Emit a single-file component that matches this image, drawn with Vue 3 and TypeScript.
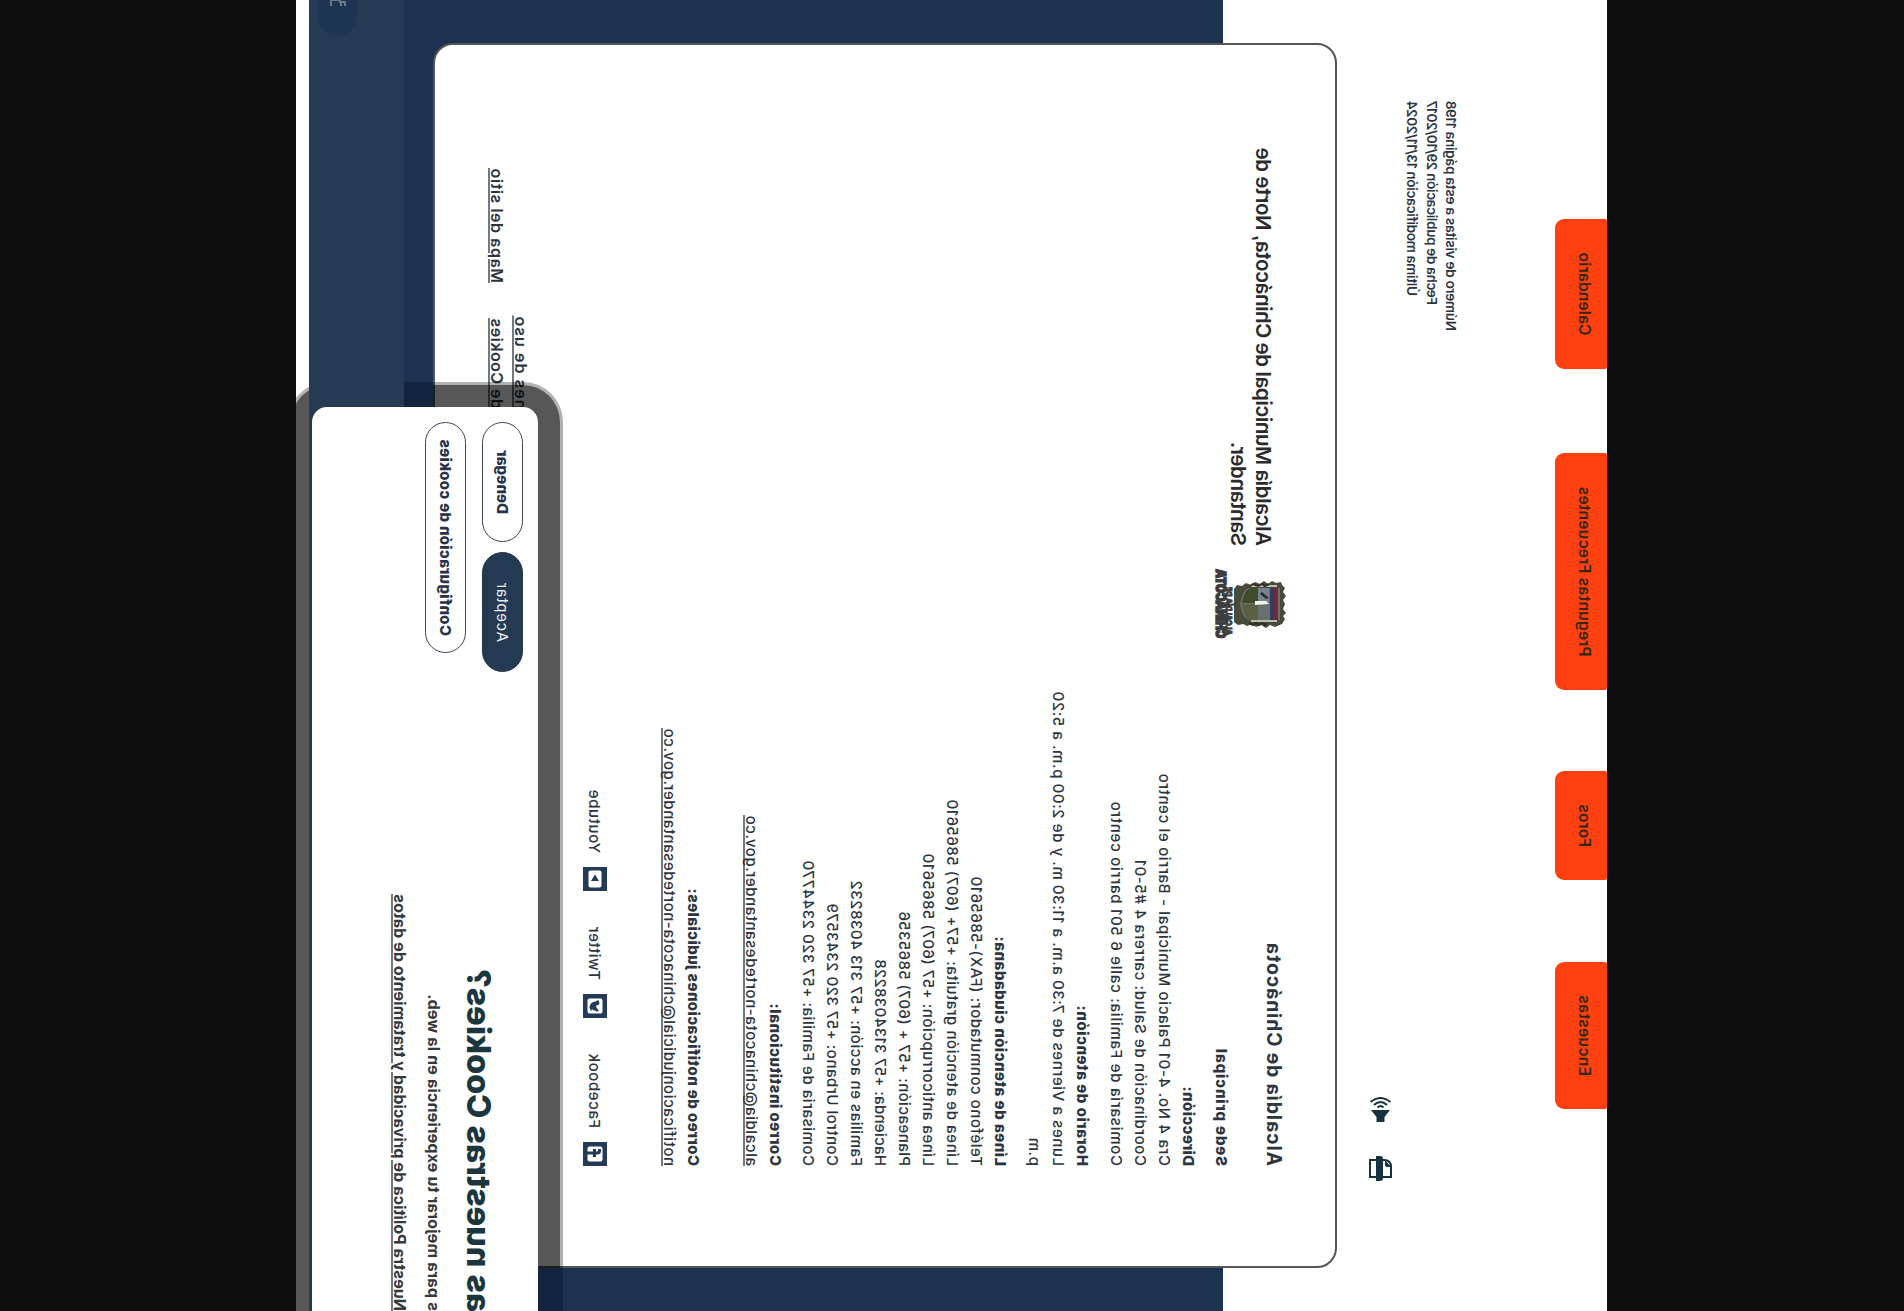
<script setup lang="ts">
import type { Directive } from 'vue'

interface Line {
  text: string
  width: number
  kind?: 'bold' | 'link'
}

const tabs = [
  { text: 'Encuestas', cls: 'tab-surveys', width: 81 },
  { text: 'Foros', cls: 'tab-forums', width: 43 },
  { text: 'Preguntas Frecuentes', cls: 'tab-faq', width: 170 },
  { text: 'Calendario', cls: 'tab-calendar', width: 83 },
]

const meta: Line[] = [
  { text: 'Número de visitas a esta página 1198', width: 230 },
  { text: 'Fecha de publicación 29/10/2017', width: 204 },
  { text: 'Última modificación 13/11/2024', width: 195 },
]

const groups: Line[][] = [
  [{ text: 'Sede principal', width: 118, kind: 'bold' }],
  [
    { text: 'Dirección:', width: 80, kind: 'bold' },
    { text: 'Cra 4 No. 4-01 Palacio Municipal - Barrio el centro', width: 393 },
    { text: 'Coordinación de Salud: carrera 4 #5-01', width: 307 },
    { text: 'Comisaría de Familia: calle 6 501 barrio centro', width: 365 },
  ],
  [
    { text: 'Horario de atención:', width: 161, kind: 'bold' },
    { text: 'Lunes a Viernes de 7:30 a.m. a 11:30 m. y de 2:00 p.m. a 5:20', width: 475 },
    { text: 'p.m', width: 29 },
  ],
  [
    { text: 'Línea de atención ciudadana:', width: 230, kind: 'bold' },
    { text: 'Teléfono conmutador: (FAX)-5865610', width: 290 },
    { text: 'Línea de atención gratuita: +57+ (607) 5865610', width: 367 },
    { text: 'Línea anticorrupción: +57 (607) 5865610', width: 313 },
    { text: 'Planeación: +57 + (607) 5865356', width: 255 },
    { text: 'Hacienda: +57 3134038228', width: 207 },
    { text: 'Familias en acción: +57 313 4038232', width: 286 },
    { text: 'Control Urbano: +57 320 2343579', width: 263 },
    { text: 'Comisaria de Familia: +57 320 2344770', width: 306 },
  ],
  [
    { text: 'Correo institucional:', width: 163, kind: 'bold' },
    { text: 'alcaldia@chinacota-nortedesantander.gov.co', width: 351, kind: 'link' },
  ],
  [
    { text: 'Correo de notificaciones judiciales:', width: 278, kind: 'bold' },
    { text: 'notificacionjudicial@chinacota-nortedesantander.gov.co', width: 438, kind: 'link' },
  ],
]

// Tracks a line of text out to its set width. The page is turned on its side,
// so the run of the text is the height of its on-screen box.
const vFit: Directive<HTMLElement, number> = {
  mounted(el, { value }) {
    const natural = el.getBoundingClientRect().height
    const count = (el.textContent ?? '').length
    el.style.letterSpacing = `${(value - natural) / count}px`
  },
}
</script>

<template>
  <div class="stage">
    <div class="page">
      <nav class="tabs">
        <a v-for="t in tabs" :key="t.text" :class="['tab', t.cls]"><span v-fit="t.width">{{ t.text }}</span></a>
      </nav>

      <div class="meta">
        <div v-for="m in meta" :key="m.text"><span v-fit="m.width">{{ m.text }}</span></div>
      </div>

      <div class="tools">
        <svg width="25" height="23" viewBox="0 0 25 23">
          <path d="M4 10V1h10q7 0 7 7v2z" fill="#fff" stroke="#16323f" stroke-width="2" />
          <path d="M14 1l7 6h-5q-2 0-2-2z" fill="#16323f" />
          <path d="M0 12q0-3 3-3h19q3 0 3 3v4h-3v-1H3v1H0z" fill="#16323f" />
          <path d="M4 15h17v7H4z" fill="#fff" stroke="#16323f" stroke-width="2" />
        </svg>
        <svg width="25" height="23" viewBox="0 0 25 23">
          <path d="M0 7.500h5L12 2v19L5 15.500H0z" fill="#16323f" />
          <path d="M14.500 8.500q3 3 0 6M17 5q6 6.500 0 13M20 1.500q8 10 0 20" fill="none" stroke="#16323f" stroke-width="2" />
        </svg>
      </div>

      <main class="card">
        <header class="head">
          <h1><span v-fit="224">Alcaldía de Chinácota</span></h1>
          <svg class="crest" width="73" height="74" viewBox="0 0 73 74">
            <path d="M16 5l5-3 3 2 3-3 4 3 5-2 4 2 4-3 4 3 4-2 3 3 3 1-1 5 2 4-3 4 3 4-3 4 2 5-3 4 2 5-3 4 1 5-4 3H18l-3-4 1-5-2-4 2-5-3-4 2-5-3-5 3-4-2-5z" fill="#484a3a" />
            <path d="M20 7h32v30q0 7-16 10Q20 44 20 37z" fill="#6f7262" />
            <path d="M20 9h32v4H20z" fill="#71283f" />
            <path d="M20 13h32v4H20z" fill="#303f5f" />
            <path d="M20 18h16v14H20z" fill="#67706c" />
            <path d="M37 18h15v14H37z" fill="#77828a" />
            <path d="M20 29h16v16q-15-2-16-8z" fill="#5a5f45" />
            <path d="M37 29h15v6q-1 8-15 10z" fill="#414a2c" />
            <path d="M36 18l3 3v11h-4z" fill="#f3f3ee" />
            <path d="M42 18l6 7-2 2-5-6z" fill="#28313a" />
            <path d="M19 10v26M54 10v26" stroke="#e2e2dc" stroke-width="1.500" />
            <path d="M17 20l-2 2 2 3-2 3 2 3-2 3 2 4M56 18l-2 4 2 3-2 4 2 5-2 3" fill="none" stroke="#2e3123" stroke-width="2" />
            <text x="5" y="61.500" textLength="48" lengthAdjust="spacingAndGlyphs" class="crest-small">ALCALDÍA DE</text>
            <text x="2" y="71.500" textLength="69" lengthAdjust="spacingAndGlyphs" class="crest-large">CHINÁCOTA</text>
          </svg>
          <div class="entity">
            <div><span v-fit="398">Alcaldía Municipal de Chinácota, Norte de</span></div>
            <div><span v-fit="104">Santander.</span></div>
          </div>
        </header>

        <section v-for="(g, i) in groups" :key="i" :class="['group', 'group-' + i]">
          <div v-for="l in g" :key="l.text" :class="['line', l.kind]"><span v-fit="l.width">{{ l.text }}</span></div>
        </section>

        <div class="social">
          <a class="facebook">
            <svg width="24" height="24" viewBox="0 0 24 24">
              <path d="M0 0h24v24H0z" fill="#243a56" />
              <rect x="4.500" y="4.500" width="15" height="15" rx="2" fill="#fff" />
              <path d="M11.500 20v-6H9v-3h2.500V9.500Q11.500 6 15 6h2v3h-1.500q-1 0-1 1v1H17v3h-2.500v6z" fill="#243a56" />
            </svg>
            <span v-fit="75">Facebook</span>
          </a>
          <a class="twitter">
            <svg width="24" height="24" viewBox="0 0 24 24">
              <path d="M0 0h24v24H0z" fill="#243a56" />
              <rect x="4.500" y="4.500" width="15" height="15" rx="2" fill="#fff" />
              <path d="M7 8q2.500 3 5.500 3 0-3 2.500-3.500l3 1-1.500 3Q16 17 10.500 17.500L6.500 16l2.500-1-2-2 1-.5-1.500-2z" fill="#243a56" />
            </svg>
            <span v-fit="54">Twitter</span>
          </a>
          <a class="youtube">
            <svg width="24" height="24" viewBox="0 0 24 24">
              <path d="M0 0h24v24H0z" fill="#243a56" />
              <rect x="3.500" y="5.500" width="17" height="13" rx="2" fill="#fff" />
              <path d="M10 8l6.500 4-6.500 4z" fill="#243a56" />
            </svg>
            <span v-fit="64">Youtube</span>
          </a>
        </div>

        <div class="policies">
          <div class="policy first"><span v-fit="94">nes de uso</span></div>
          <div class="policy second"><span v-fit="91">de Cookies</span><span v-fit="115">Mapa del sitio</span></div>
        </div>
      </main>

      <div class="halo"></div>
      <div class="footer">
        <div class="pill">
          <svg width="16" height="16" viewBox="0 0 16 16"><path d="M0 1h4v5h2v9H0M0 5h3" fill="none" stroke="#6d7886" stroke-width="2" /></svg>
        </div>
      </div>

      <div class="dialog">
        <div class="copy">
          <h2><span v-fit="343">as nuestras Cookies?</span></h2>
          <p><span v-fit="317">s para mejorar tu experiencia en la web.</span></p>
          <p class="privacy"><span v-fit="417">Nuestra Política de privacidad y tratamiento de datos</span></p>
        </div>
        <div class="actions">
          <div class="row">
            <button class="accept"><span v-fit="60">Aceptar</span></button>
            <button><span v-fit="64">Denegar</span></button>
          </div>
          <button class="settings"><span v-fit="197">Configuración de cookies</span></button>
        </div>
      </div>
    </div>
  </div>
</template>

<style>
body {
  background: #0f0f0f;
  overflow: hidden;
}
</style>

<style scoped>
* {
  box-sizing: border-box;
  margin: 0;
  padding: 0;
}
.stage {
  width: 1904px;
  height: 1311px;
  overflow: hidden;
  background: #0f0f0f;
}
.page {
  position: relative;
  width: 1311px;
  height: 1311px;
  overflow: hidden;
  transform-origin: 0 0;
  transform: matrix(0, -1, -1, 0, 1607, 1311);
  background: linear-gradient(#fff 384px, #1b3350 384px, #1b3350 1298px, #fff 1298px);
  font-family: Inter, 'Liberation Sans', sans-serif;
  font-size: 15px;
  font-weight: 500;
  color: #2c3440;
}
span {
  white-space: nowrap;
}
.tabs {
  display: flex;
  height: 52px;
  padding-left: 202px;
}
.tab {
  display: flex;
  justify-content: center;
  height: 52px;
  padding-top: 11px;
  line-height: 24px;
  border-radius: 2px 2px 9px 9px;
  background: #ff4010;
  color: #33280f;
  font-size: 15.5px;
  font-weight: 600;
}
.tab-surveys { width: 147px; margin-right: 82px; }
.tab-forums { width: 109px; margin-right: 81px; }
.tab-faq { width: 237px; margin-right: 84px; }
.tab-calendar { width: 150px; }
.meta {
  margin-top: 94.5px;
  padding-right: 101px;
  text-align: right;
  font-size: 13.5px;
  font-weight: 600;
  line-height: 19.5px;
}
.meta div {
  height: 19.5px;
}
.tools {
  display: flex;
  gap: 34px;
  height: 23px;
  margin-top: 10px;
  padding-left: 130px;
}
.card {
  height: 904px;
  width: 1225px;
  margin: 32px 0 0 42.5px;
  padding-left: 100.5px;
  border: 2px solid #565656;
  border-radius: 20px;
  background: #fff;
}
.head {
  display: flex;
  height: 101.5px;
}
h1 {
  width: 526px;
  padding-top: 49px;
  font-size: 19.5px;
  font-weight: 700;
  line-height: 24px;
}
.crest {
  flex: none;
  margin: 48px 21px 0 0;
}
.crest-small {
  font-size: 8px;
  font-weight: 800;
  fill: #3d3d3d;
  stroke: #3d3d3d;
  stroke-width: 1px;
}
.crest-large {
  font-size: 12.5px;
  font-weight: 900;
  fill: #3d3d3d;
  stroke: #3d3d3d;
  stroke-width: 1.5px;
}
.entity {
  padding-top: 59px;
  color: #2b2b2b;
  font-size: 20.5px;
  font-weight: 600;
  line-height: 25px;
}
.group {
  margin-bottom: 10px;
}
.group-0 { margin-bottom: 9px; }
.group-3 { margin-bottom: 9px; }
.group-4 { margin-bottom: 34px; }
.group-5 { margin-bottom: 0; }
.line {
  height: 24px;
  line-height: 24px;
}
.bold {
  font-weight: 800;
}
.link {
  text-decoration: underline #6d7a88;
  text-decoration-thickness: 1.5px;
  text-underline-offset: 1px;
  text-decoration-skip-ink: none;
}
.social {
  display: flex;
  height: 25px;
  margin-top: 50.5px;
  line-height: 26px;
}
.social a {
  display: flex;
  gap: 14px;
}
.facebook { width: 148px; }
.twitter { width: 127px; }
.policies {
  margin-top: 49px;
}
.policy {
  display: flex;
  justify-content: flex-end;
  gap: 35px;
  height: 24px;
  line-height: 24px;
  font-size: 16px;
  font-weight: 600;
  text-decoration: underline #6d7a88;
  text-decoration-thickness: 1.5px;
  text-underline-offset: 1px;
}
.first { padding-right: 270px; }
.second { padding-right: 122.5px; }
.halo {
  position: absolute;
  left: -60px;
  top: 1044px;
  width: 989px;
  height: 275px;
  border: 3px solid rgba(0, 0, 0, 0.3);
  border-radius: 40px;
  background: rgba(0, 0, 0, 0.66) padding-box;
}
.halo::before,
.halo::after {
  content: '';
  position: absolute;
  background: #12243e;
}
.halo::before {
  left: 57px;
  top: -3px;
  width: 42.5px;
  height: 25px;
}
.halo::after {
  right: -3px;
  top: 127px;
  width: 25px;
  height: 29px;
}
.footer {
  position: absolute;
  left: 0;
  top: 1203px;
  width: 1311px;
  height: 95px;
  background: #253a53;
}
.pill {
  position: absolute;
  right: -80px;
  top: 47px;
  width: 116px;
  height: 39px;
  padding: 11px 0 0 30px;
  border-radius: 20px;
  background: #1d3654;
}
.dialog {
  position: absolute;
  left: -20px;
  top: 1069px;
  display: flex;
  justify-content: space-between;
  width: 924px;
  height: 225.5px;
  padding: 15px 15px 0 20px;
  border-radius: 15px;
  background: #fff;
}
.copy {
  display: flex;
  flex-direction: column;
  align-items: flex-start;
  padding-top: 25px;
  color: #33383c;
}
h2 {
  margin-left: -1px;
  height: 43px;
  line-height: 40px;
  color: #1b363d;
  font-size: 32.5px;
  font-weight: 800;
}
.copy p {
  height: 35px;
  font-size: 16px;
  font-weight: 700;
  line-height: 42px;
}
.copy .privacy {
  margin-left: 0;
  line-height: 41px;
  text-decoration: underline #6d7a88;
  text-decoration-thickness: 1.5px;
  text-underline-offset: 0.5px;
}
.actions {
  display: flex;
  flex-direction: column;
  align-items: flex-end;
  gap: 16px;
}
.row {
  display: flex;
  gap: 10px;
}
button {
  width: 120px;
  height: 41px;
  border: 1px solid #3a4658;
  border-radius: 21px;
  background: #fff;
  color: #26324a;
  font-family: inherit;
  font-size: 15px;
  font-weight: 800;
}
.accept {
  border-color: #243a53;
  background: #243a53;
  color: #e8eaf0;
  font-weight: 400;
}
.settings {
  width: 231px;
}
</style>
